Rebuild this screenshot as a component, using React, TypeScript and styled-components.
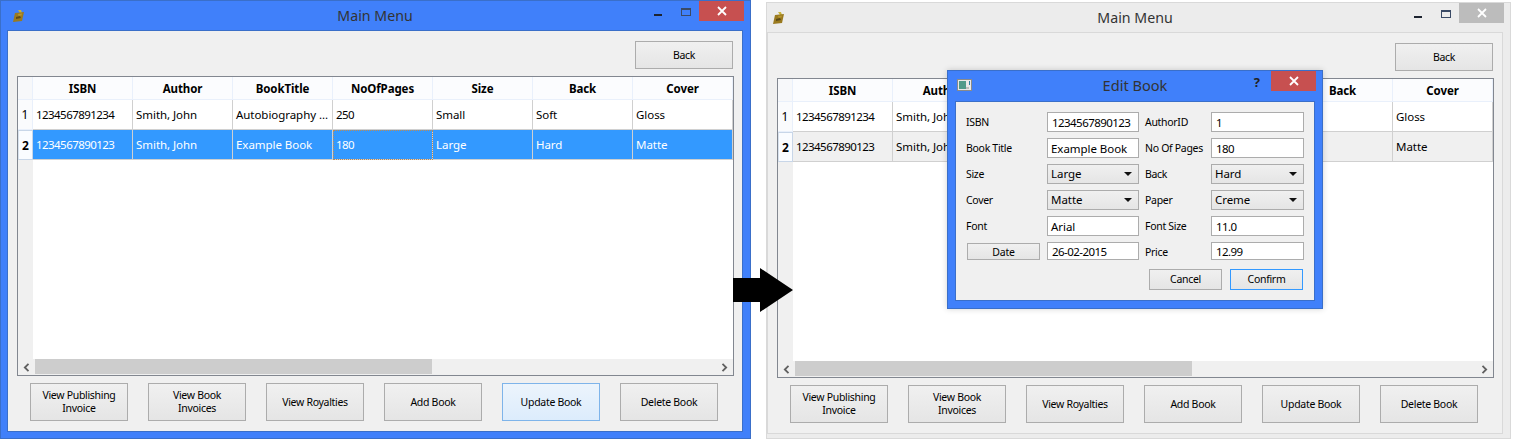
import React from "react";
import styled, { createGlobalStyle } from "styled-components";

const Global = createGlobalStyle`
  html, body { margin: 0; padding: 0; background: #fff; }
  body { font-family: "Noto Sans", "Liberation Sans", sans-serif; font-size: 11px; color: #000; }
  * { box-sizing: border-box; }
`;

const Page = styled.div`
  position: relative;
  width: 1516px;
  height: 442px;
  overflow: hidden;
  display: flex;
  align-items: flex-start;
  gap: 15px;
  background: #fff;
`;

const Frame = styled.div<{ $active: boolean }>`
  flex: none;
  width: ${(p) => (p.$active ? 751 : 745)}px;
  height: ${(p) => (p.$active ? 439 : 437)}px;
  margin-top: ${(p) => (p.$active ? 0 : 2)}px;
  border: 1px solid ${(p) => (p.$active ? "#3a6fc9" : "#d9d9d9")};
  background: ${(p) => (p.$active ? "#4080fa" : "#ececec")};
  padding: 0 7px 0 ${(p) => (p.$active ? 6 : 0)}px;
  display: flex;
  flex-direction: column;
`;

const TitleBar = styled.div`
  position: relative;
  height: 29px;
  flex: none;
  display: flex;
  align-items: flex-start;
  justify-content: center;
`;

const Title = styled.div`
  font-size: 14.2px;
  line-height: 29px;
  color: #333;
`;

const AppIcon = styled.svg`
  position: absolute;
  left: 5px;
  top: 8px;
`;

const Caption = styled.div`
  position: absolute;
  right: -1px;
  top: 0;
  display: flex;
  align-items: flex-start;
`;

const MinBtn = styled.div`
  width: 8px;
  height: 2px;
  margin-top: 13px;
  background: #1d2430;
  margin-right: 19px;
`;

const MaxBtn = styled.div`
  width: 10px;
  height: 8px;
  margin-top: 7px;
  border: 1px solid #3a4a66;
  border-top-width: 2px;
  margin-right: 8px;
`;

const CloseBtn = styled.div<{ $active: boolean }>`
  width: 45px;
  height: 20px;
  background: ${(p) => (p.$active ? "#c75050" : "#bcbcbc")};
  display: flex;
  align-items: center;
  justify-content: center;
`;

const Client = styled.div<{ $active: boolean }>`
  width: 736px;
  height: 402px;
  flex: none;
  border: 1px solid ${(p) => (p.$active ? "#3a6fc9" : "#d9d9d9")};
  background: #f0f0f0;
  padding: 10px 8px 0 9px;
  display: flex;
  flex-direction: column;
`;

const Btn = styled.div<{ $hover?: boolean }>`
  flex: none;
  width: 98px;
  height: 38px;
  border: 1px solid ${(p) => (p.$hover ? "#7eb4ea" : "#acacac")};
  background: ${(p) =>
    p.$hover
      ? "linear-gradient(#ecf4fc, #dcecfc)"
      : "linear-gradient(#f0f0f0, #e5e5e5)"};
  display: flex;
  align-items: center;
  justify-content: center;
  text-align: center;
  font-size: 10.5px;
  letter-spacing: -0.3px;
  line-height: 13px;
  color: #000;
`;

const BackBar = styled.div`
  display: flex;
  justify-content: flex-end;
  padding-right: 1px;
  margin-bottom: 7px;
`;

const BackBtn = styled(Btn)`
  height: 28px;
`;

const Table = styled.div`
  height: 300px;
  width: 717px;
  flex: none;
  border: 1px solid #828790;
  background: #fff;
  display: flex;
  flex-direction: column;
`;

const Row = styled.div`
  display: flex;
  flex: none;
`;

const HeadRow = styled(Row)`
  height: 23px;
  background: #fbfcfe;
`;

const Corner = styled.div`
  width: 15px;
  border-right: 1px solid #e9f0fb;
  border-bottom: 1px solid #e9f0fb;
  background: #f7f8fa;
`;

const HeadCell = styled.div`
  width: 100px;
  border-right: 1px solid #e9f0fb;
  border-bottom: 1px solid #e9f0fb;
  font-weight: 700;
  font-size: 11.5px;
  letter-spacing: -0.1px;
  line-height: 24px;
  text-align: center;
  color: #000;
`;

const RowHead = styled.div<{ $current?: boolean }>`
  width: 15px;
  height: 30px;
  flex: none;
  background: ${(p) => (p.$current ? "#fafcff" : "#fafbfd")};
  border-right: 1px solid #e9f0fb;
  border-bottom: 1px solid #e9f0fb;
  ${(p) => p.$current && "border: 1px solid #c8d6e8; border-left-color: #d8e2ee;"}
  font-size: 12px;
  font-weight: ${(p) => (p.$current ? 700 : 400)};
  line-height: 29px;
  text-align: center;
`;

const DataRow = styled(Row)`
  height: 30px;
`;

const Cell = styled.div<{
  $tone: "plain" | "selected" | "inactive";
  $focus?: boolean;
  $digits?: boolean;
}>`
  width: 100px;
  height: 30px;
  padding-left: 3px;
  border-right: 1px solid #d0d0d0;
  border-bottom: 1px solid #d0d0d0;
  line-height: 30px;
  font-size: 11.5px;
  letter-spacing: ${(p) => (p.$digits ? "-0.55px" : "-0.05px")};
  white-space: nowrap;
  overflow: hidden;
  color: ${(p) => (p.$tone === "selected" ? "#fff" : "#000")};
  background: ${(p) =>
    p.$tone === "selected" ? "#3399ff" : p.$tone === "inactive" ? "#f0f0f0" : "#fff"};
  ${(p) => p.$focus && "outline: 1px dotted #c08a50; outline-offset: -1px;"}
`;

const Filler = styled.div`
  flex: 1;
  display: flex;
  min-height: 0;
`;

const Gutter = styled.div`
  width: 15px;
  background: #f0f0f0;
`;

const ScrollBar = styled.div`
  flex: none;
  height: 16px;
  background: #f0f0f0;
  display: flex;
  align-items: stretch;
`;

const ScrollArrow = styled.div`
  flex: none;
  width: 17px;
  display: flex;
  align-items: center;
  justify-content: center;
`;

const Thumb = styled.div`
  flex: none;
  width: 397px;
  height: 15px;
  background: #cdcdcd;
`;

const Track = styled.div`
  flex: 1;
`;

const ButtonRow = styled.div`
  display: flex;
  gap: 20px;
  margin-top: 7px;
  padding-left: 13px;
`;

const Arrow = styled.svg`
  position: absolute;
  left: 733px;
  top: 268px;
`;

/* Dialog */
const Dialog = styled.div`
  position: absolute;
  left: 947px;
  top: 70px;
  width: 376px;
  height: 239px;
  background: #4080fa;
  border: 1px solid #3a6fc9;
  padding: 0 7px;
  box-shadow: 0 0 6px rgba(0, 0, 0, 0.18);
  display: flex;
  flex-direction: column;
`;

const DialogBar = styled.div`
  position: relative;
  height: 30px;
  flex: none;
  text-align: center;
`;

const DialogTitle = styled.div`
  font-size: 14.6px;
  line-height: 29px;
  color: #333;
`;

const DialogIcon = styled.svg`
  position: absolute;
  left: 2px;
  top: 8px;
`;

const Help = styled.div`
  position: absolute;
  right: 55px;
  top: 1px;
  font-size: 13px;
  font-weight: 700;
  line-height: 20px;
  color: #222;
`;

const DialogClose = styled(CloseBtn)`
  position: absolute;
  right: -1px;
  top: 0;
`;

const DialogBody = styled.div`
  flex: 1;
  background: #f0f0f0;
  border: 1px solid #3a6fc9;
  margin-bottom: 7px;
  padding: 10px 11px 0 10px;
`;

const Form = styled.div`
  display: grid;
  grid-template-columns: 81px 92px 72px 93px;
  grid-auto-rows: 20px;
  row-gap: 6px;
`;

const FieldLabel = styled.div<{ $second?: boolean }>`
  font-size: 10.5px;
  letter-spacing: -0.3px;
  line-height: 21px;
  padding-left: ${(p) => (p.$second ? 6 : 0)}px;
  white-space: nowrap;
`;

const Input = styled.div<{ $digits?: boolean; $short?: boolean }>`
  height: ${(p) => (p.$short ? 18 : 20)}px;
  border: 1px solid #acacac;
  background: #fff;
  padding-left: ${(p) => (p.$digits ? 4 : 3)}px;
  font-size: 11.5px;
  letter-spacing: ${(p) => (p.$digits ? "-0.55px" : "-0.05px")};
  line-height: ${(p) => (p.$short ? 17 : 19)}px;
  white-space: nowrap;
  overflow: hidden;
`;

const Select = styled.div`
  height: 20px;
  border: 1px solid #acacac;
  background: linear-gradient(#f0f0f0, #e5e5e5);
  padding: 0 6px 2px 3px;
  display: flex;
  align-items: center;
  justify-content: space-between;
  font-size: 11.5px;
  letter-spacing: -0.05px;
`;

const Caret = styled.div`
  width: 0;
  height: 0;
  margin-top: 2px;
  border-left: 4px solid transparent;
  border-right: 4px solid transparent;
  border-top: 4px solid #111;
`;

const DateCell = styled.div`
  padding: 1px 7px 1px 1px;
`;

const DateBtn = styled.div`
  height: 17px;
  border: 1px solid #acacac;
  background: linear-gradient(#f0f0f0, #e5e5e5);
  text-align: center;
  font-size: 10.5px;
  letter-spacing: -0.2px;
  line-height: 16px;
`;

const DialogActions = styled.div`
  display: flex;
  justify-content: flex-end;
  gap: 8px;
  margin-top: 7px;
`;

const DialogBtn = styled.div<{ $default?: boolean }>`
  width: 73px;
  height: 21px;
  border: 1px solid ${(p) => (p.$default ? "#3399ff" : "#acacac")};
  background: linear-gradient(#f0f0f0, #e5e5e5);
  text-align: center;
  font-size: 10.5px;
  letter-spacing: -0.3px;
  line-height: 19px;
`;

const rows = [
  ["1234567891234", "Smith, John", "Autobiography ...", "250", "Small", "Soft", "Gloss"],
  ["1234567890123", "Smith, John", "Example Book", "180", "Large", "Hard", "Matte"],
];
const heads = ["ISBN", "Author", "BookTitle", "NoOfPages", "Size", "Back", "Cover"];

const BookIcon = () => (
  <AppIcon width="13" height="14" viewBox="0 0 13 14">
    <path d="M6 1l3 0 1 3-2 0z" fill="#c9b53a" />
    <path d="M3 4l9-1-2 9-9 1z" fill="#9a7a1f" />
    <path d="M4 8l4-1 1 2-5 1z" fill="#5d4a16" />
    <path d="M6 5l4-.5-.5 2-3 .3z" fill="#b8962c" />
  </AppIcon>
);

const Close = () => (
  <svg width="10" height="10" viewBox="0 0 10 10">
    <path d="M1 1l8 8M9 1l-8 8" stroke="#fff" strokeWidth="1.8" />
  </svg>
);

const Chevron = ({ dir }: { dir: "l" | "r" }) => (
  <svg width="7" height="9" viewBox="0 0 7 9">
    <path
      d={dir === "l" ? "M5.5 .8L1.8 4.5l3.7 3.7" : "M1.5 .8l3.7 3.7-3.7 3.7"}
      fill="none"
      stroke="#606060"
      strokeWidth="1.8"
    />
  </svg>
);

const MainWindow = ({ active }: { active: boolean }) => (
  <Frame $active={active}>
    <TitleBar>
      <BookIcon />
      <Title>Main Menu</Title>
      <Caption>
        <MinBtn />
        <MaxBtn />
        <CloseBtn $active={active}>
          <Close />
        </CloseBtn>
      </Caption>
    </TitleBar>
    <Client $active={active}>
      <BackBar>
        <BackBtn>Back</BackBtn>
      </BackBar>
      <Table>
        <HeadRow>
          <Corner />
          {heads.map((h) => (
            <HeadCell key={h}>{h}</HeadCell>
          ))}
        </HeadRow>
        {rows.map((r, i) => (
          <DataRow key={r[0]}>
            <RowHead $current={i === 1}>{i + 1}</RowHead>
            {r.map((c, j) => (
              <Cell
                key={j}
                $digits={j === 0 || j === 3}
                $tone={i === 1 ? (active ? "selected" : "inactive") : "plain"}
                $focus={active && i === 1 && j === 3}
              >
                {c}
              </Cell>
            ))}
          </DataRow>
        ))}
        <Filler>
          <Gutter />
        </Filler>
        <ScrollBar>
          <ScrollArrow>
            <Chevron dir="l" />
          </ScrollArrow>
          <Thumb />
          <Track />
          <ScrollArrow>
            <Chevron dir="r" />
          </ScrollArrow>
        </ScrollBar>
      </Table>
      <ButtonRow>
        <Btn>
          View Publishing
          <br />
          Invoice
        </Btn>
        <Btn>
          View Book
          <br />
          Invoices
        </Btn>
        <Btn>View Royalties</Btn>
        <Btn>Add Book</Btn>
        <Btn $hover={active}>Update Book</Btn>
        <Btn>Delete Book</Btn>
      </ButtonRow>
    </Client>
  </Frame>
);

const Drop = ({ value }: { value: string }) => (
  <Select>
    {value}
    <Caret />
  </Select>
);

export default function App() {
  return (
    <Page>
      <Global />
      <MainWindow active />
      <MainWindow active={false} />
      <Arrow width="60" height="44" viewBox="0 0 60 44">
        <path d="M0 10h27V0l33 22-33 22V34H0z" fill="#000" />
      </Arrow>
      <Dialog>
        <DialogBar>
          <DialogIcon width="15" height="12" viewBox="0 0 15 12">
            <rect x="0.5" y="0.5" width="14" height="11" fill="#e8e8e8" stroke="#8a8a8a" />
            <rect x="2" y="2" width="7" height="8" fill="#4f9a8a" />
            <rect x="9" y="8" width="3" height="2" fill="#bdbdbd" />
            <rect x="12" y="2" width="1" height="4" fill="#2c7f9c" />
          </DialogIcon>
          <DialogTitle>Edit Book</DialogTitle>
          <Help>?</Help>
          <DialogClose $active>
            <Close />
          </DialogClose>
        </DialogBar>
        <DialogBody>
          <Form>
            <FieldLabel>ISBN</FieldLabel>
            <Input $digits>1234567890123</Input>
            <FieldLabel $second>AuthorID</FieldLabel>
            <Input $digits>1</Input>
            <FieldLabel>Book Title</FieldLabel>
            <Input>Example Book</Input>
            <FieldLabel $second>No Of Pages</FieldLabel>
            <Input $digits>180</Input>
            <FieldLabel>Size</FieldLabel>
            <Drop value="Large" />
            <FieldLabel $second>Back</FieldLabel>
            <Drop value="Hard" />
            <FieldLabel>Cover</FieldLabel>
            <Drop value="Matte" />
            <FieldLabel $second>Paper</FieldLabel>
            <Drop value="Creme" />
            <FieldLabel>Font</FieldLabel>
            <Input>Arial</Input>
            <FieldLabel $second>Font Size</FieldLabel>
            <Input $digits>11.0</Input>
            <DateCell>
              <DateBtn>Date</DateBtn>
            </DateCell>
            <Input $digits $short>26-02-2015</Input>
            <FieldLabel $second>Price</FieldLabel>
            <Input $digits $short>12.99</Input>
          </Form>
          <DialogActions>
            <DialogBtn>Cancel</DialogBtn>
            <DialogBtn $default>Confirm</DialogBtn>
          </DialogActions>
        </DialogBody>
      </Dialog>
    </Page>
  );
}
